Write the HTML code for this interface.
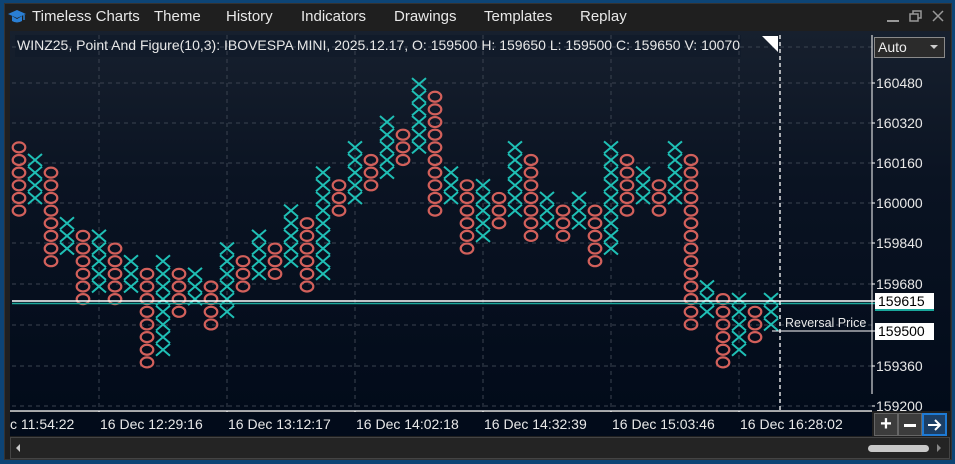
<!DOCTYPE html>
<html><head><meta charset="utf-8"><style>
*{margin:0;padding:0;box-sizing:border-box}
body{width:955px;height:464px;background:#0d4475;font-family:"Liberation Sans","DejaVu Sans",sans-serif;overflow:hidden;position:relative}
.win{position:absolute;left:4px;top:3px;width:948px;height:457px;background:#1f1f1f;border:1px solid #333}
.menu{position:absolute;top:8px;font-size:15px;color:#e8e8e8}
.chart{position:absolute;left:10px;top:31px;width:940px;height:380px;background:linear-gradient(#17202e,#0a1322 40%,#020b1a)}
.lbl{position:absolute;font-size:13px;color:#e8e8e8}
</style></head><body>
<div class="win"></div>
<svg style="position:absolute;left:7px;top:9px" width="20" height="16" viewBox="0 0 20 16"><path d="M1 5 L10 1 L19 5 L10 9 Z" fill="#2a7fd4"/><path d="M5 7 V12 Q10 15 15 12 V7 L10 10 Z" fill="#2a7fd4"/><path d="M17 6 V11" stroke="#2a7fd4" stroke-width="1.5"/></svg>
<div class="menu" style="left:32px">Timeless Charts</div>
<div class="menu" style="left:154px">Theme</div>
<div class="menu" style="left:226px">History</div>
<div class="menu" style="left:301px">Indicators</div>
<div class="menu" style="left:394px">Drawings</div>
<div class="menu" style="left:484px">Templates</div>
<div class="menu" style="left:580px">Replay</div>
<svg style="position:absolute;left:880px;top:8px" width="70" height="18"><path d="M7 13 H19" stroke="#999" stroke-width="2"/><rect x="30" y="6" width="8" height="7" fill="none" stroke="#999" stroke-width="1.5"/><path d="M33 6 V3 H41 V10 H38" fill="none" stroke="#999" stroke-width="1.5"/><path d="M53 3 L63 13 M63 3 L53 13" stroke="#999" stroke-width="1.5"/></svg>
<div class="chart"></div>
<div style="position:absolute;left:15px;top:35px;width:726px;height:22px;background:#111b2a"></div>
<svg id="c" style="position:absolute;left:0;top:0" width="955" height="464"></svg>
<div class="lbl" style="left:17px;top:37px;font-size:14px;white-space:nowrap">WINZ25, Point And Figure(10,3): IBOVESPA MINI, 2025.12.17, O: 159500 H: 159650 L: 159500 C: 159650 V: 10070</div>
<div style="position:absolute;left:874px;top:37px;width:71px;height:21px;background:#2b2b2b;border:1px solid #8a8a8a;color:#eee;font-size:14px;padding:1px 0 0 3px">Auto<span style="position:absolute;right:6px;top:7px;border:4px solid transparent;border-top:4px solid #ccc"></span></div>
<div class="lbl" style="left:876px;top:75px;font-size:14px">160480</div>
<div class="lbl" style="left:876px;top:115px;font-size:14px">160320</div>
<div class="lbl" style="left:876px;top:155px;font-size:14px">160160</div>
<div class="lbl" style="left:876px;top:195px;font-size:14px">160000</div>
<div class="lbl" style="left:876px;top:235px;font-size:14px">159840</div>
<div class="lbl" style="left:876px;top:276px;font-size:14px">159680</div>
<div class="lbl" style="left:876px;top:358px;font-size:14px">159360</div>
<div class="lbl" style="left:876px;top:398px;font-size:14px">159200</div>
<div style="position:absolute;left:875px;top:293px;width:59px;height:18px;background:#fff;border-bottom:2px solid #1aa89c;color:#000;font-size:14px;padding:0 0 0 3px;line-height:16px">159615</div>
<div style="position:absolute;left:875px;top:323px;width:59px;height:17px;background:#fff;color:#000;font-size:14px;padding:0 0 0 3px;line-height:17px">159500</div>
<div class="lbl" style="left:785px;top:316px;font-size:12.5px">Reversal Price</div>
<div style="position:absolute;left:10px;top:412px;width:862px;height:24px;background:#020b1a"></div>
<div class="lbl" style="top:416px;font-size:14px;width:90px;overflow:hidden;left:10px;white-space:nowrap">c 11:54:22</div>
<div class="lbl" style="left:100px;top:416px;font-size:14px">16 Dec 12:29:16</div>
<div class="lbl" style="left:228px;top:416px;font-size:14px">16 Dec 13:12:17</div>
<div class="lbl" style="left:356px;top:416px;font-size:14px">16 Dec 14:02:18</div>
<div class="lbl" style="left:484px;top:416px;font-size:14px">16 Dec 14:32:39</div>
<div class="lbl" style="left:612px;top:416px;font-size:14px">16 Dec 15:03:46</div>
<div class="lbl" style="left:740px;top:416px;font-size:14px">16 Dec 16:28:02</div>
<div style="position:absolute;left:874px;top:413px;width:24px;height:23px;background:#3c3c3c;border:1px solid #666;color:#fff;font-size:20px;font-weight:bold;text-align:center;line-height:20px">+</div>
<div style="position:absolute;left:898px;top:413px;width:24px;height:23px;background:#3c3c3c;border:1px solid #666;"><div style="position:absolute;left:5px;top:10px;width:12px;height:3px;background:#fff"></div></div>
<div style="position:absolute;left:922px;top:413px;width:25px;height:23px;background:#1c3f66;border:2px solid #1e7ad4;"><svg width="21" height="19"><path d="M4 10 H16 M11 5 L16 10 L11 15" stroke="#fff" stroke-width="2" fill="none"/></svg></div>
<div style="position:absolute;left:10px;top:437px;width:940px;height:22px;background:#242424;border:1px solid #444"></div>
<div style="position:absolute;left:16px;top:444px;border:4px solid transparent;border-right:4px solid #ccc;border-left:0"></div>
<div style="position:absolute;left:868px;top:445px;width:61px;height:7px;background:#c8c8c8;border-radius:4px"></div>
<div style="position:absolute;left:937px;top:444px;border:4px solid transparent;border-left:4px solid #888;border-right:0"></div>
<script>
var s=document.getElementById('c'),h='';
[47,83,123,163,203,243,284,325,366,406].forEach(function(y){h+='<line x1="12" x2="872" y1="'+y+'" y2="'+y+'" stroke="#3b4350" stroke-dasharray="4,4"/>';});
[99,227,355,483,611,739].forEach(function(x){h+='<line x1="'+x+'" x2="'+x+'" y1="35" y2="411" stroke="#3b4350" stroke-dasharray="4,4"/>';});
var cols=[[-1,4],[0,3],[1,8],[5,7],[6,11],[6,10],[7,11],[8,10],[9,16],[8,15],[9,12],[9,11],[10,13],[7,12],[8,10],[6,9],[7,9],[4,8],[5,10],[1,9],[2,4],[-1,3],[0,2],[-3,1],[-2,0],[-6,-1],[-5,4],[1,3],[2,7],[2,6],[3,5],[-1,4],[0,6],[3,5],[4,6],[3,5],[4,8],[-1,7],[0,4],[1,3],[2,4],[-1,3],[0,13],[10,12],[11,16],[11,15],[12,14],[11,13]];
cols.forEach(function(c,i){var x=19+16*i;for(var k=c[0];k<=c[1];k++){var y=160+12.65*k;
if(i%2==0)h+='<ellipse cx="'+x+'" cy="'+y+'" rx="6.3" ry="5" fill="none" stroke="#d2605b" stroke-width="2.2"/>';
else h+='<path d="M'+(x-7)+' '+(y-6)+'L'+(x+7)+' '+(y+6)+'M'+(x+7)+' '+(y-6)+'L'+(x-7)+' '+(y+6)+'" stroke="#1fbfb5" stroke-width="2"/>';}});
h+='<line x1="12" x2="875" y1="301" y2="301" stroke="#fff" stroke-width="1.5"/><line x1="12" x2="875" y1="303.5" y2="303.5" stroke="#1aa89c" stroke-width="1.5"/>';
h+='<line x1="772" x2="875" y1="331" y2="331" stroke="#fff"/>';
h+='<line x1="780" x2="780" y1="35" y2="411" stroke="#fff" stroke-dasharray="4,3" stroke-width="1.3"/>';
h+='<path d="M762 36 H778 V52 Z" fill="#fff"/>';
h+='<line x1="872" x2="872" y1="35" y2="394" stroke="#fff"/>';
[83,123,163,203,243,284,366,406].forEach(function(y){h+='<line x1="872" x2="875" y1="'+y+'" y2="'+y+'" stroke="#fff"/>';});
h+='<line x1="10" x2="872" y1="411" y2="411" stroke="#fff" stroke-width="1.3"/>';
[99,227,355,483,611,739].forEach(function(x){h+='<line x1="'+x+'" x2="'+x+'" y1="411" y2="415" stroke="#fff"/>';});
s.innerHTML=h;
</script>
</body></html>
